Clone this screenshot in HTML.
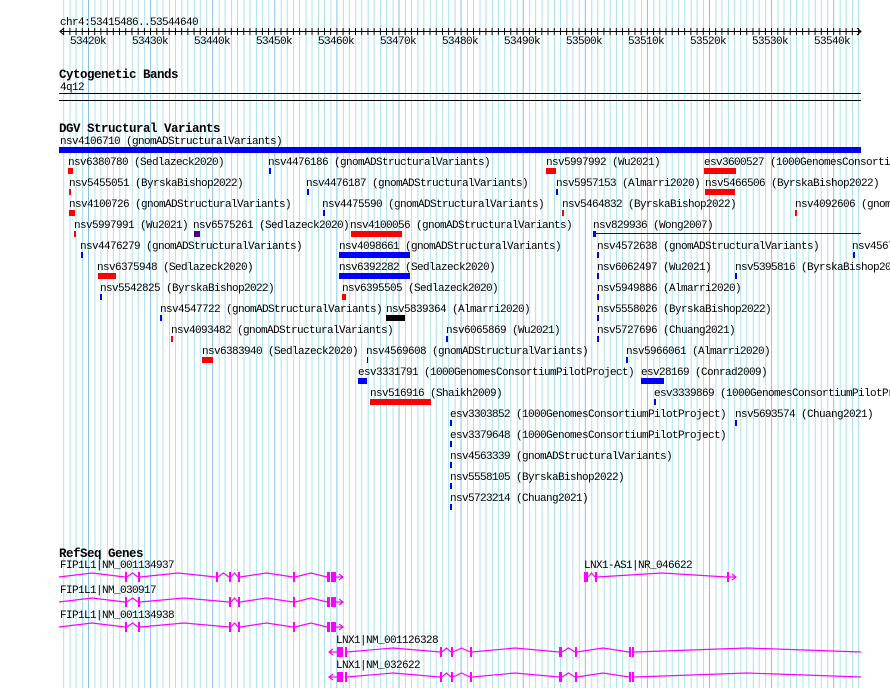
<!DOCTYPE html>
<html><head><meta charset="utf-8"><style>
html,body{margin:0;padding:0;background:#fff;width:890px;height:688px;overflow:hidden}
svg{display:block}
text{font-family:"Liberation Mono",monospace;font-size:11px;letter-spacing:-0.6px;fill:#000}
.h{font-weight:bold;font-size:12.5px;letter-spacing:-0.5px}
</style></head><body>
<svg width="890" height="688" viewBox="0 0 890 688" xmlns="http://www.w3.org/2000/svg" shape-rendering="crispEdges">
<defs>
<pattern id="g" patternUnits="userSpaceOnUse" x="88" y="0" width="62.1" height="688">
<rect x="0" y="0" width="1" height="688" fill="#86c2e6"/>
<rect x="6.21" y="0" width="1" height="688" fill="#a8e4ec"/>
<rect x="12.42" y="0" width="1" height="688" fill="#a8e4ec"/>
<rect x="18.63" y="0" width="1" height="688" fill="#a8e4ec"/>
<rect x="24.84" y="0" width="1" height="688" fill="#a8e4ec"/>
<rect x="31.05" y="0" width="1" height="688" fill="#a8e4ec"/>
<rect x="37.26" y="0" width="1" height="688" fill="#a8e4ec"/>
<rect x="43.47" y="0" width="1" height="688" fill="#a8e4ec"/>
<rect x="49.68" y="0" width="1" height="688" fill="#a8e4ec"/>
<rect x="55.89" y="0" width="1" height="688" fill="#a8e4ec"/>
</pattern>
<pattern id="t" patternUnits="userSpaceOnUse" x="88" y="0" width="6.21" height="688">
<rect x="0" y="28" width="1" height="7" fill="#000"/>
</pattern>
</defs>
<rect x="59" y="0" width="802" height="688" fill="url(#g)"/>

<!-- ruler -->
<text x="60" y="25">chr4:53415486..53544640</text>
<rect x="60" y="31" width="801" height="1" fill="#000"/>
<rect x="62" y="0" width="797" height="688" fill="url(#t)" clip-path="inset(0)"/>
<path d="M64 28 L60 31.5 L64 35 M857 28 L861 31.5 L857 35" stroke="#000" fill="none" shape-rendering="auto"/>
<g text-anchor="middle">
<text x="88" y="44">53420k</text><text x="150" y="44">53430k</text><text x="212" y="44">53440k</text>
<text x="274" y="44">53450k</text><text x="336" y="44">53460k</text><text x="398" y="44">53470k</text>
<text x="460" y="44">53480k</text><text x="522" y="44">53490k</text><text x="584" y="44">53500k</text>
<text x="646" y="44">53510k</text><text x="708" y="44">53520k</text><text x="770" y="44">53530k</text>
<text x="832" y="44">53540k</text>
</g>

<!-- cytobands -->
<text class="h" x="59" y="78">Cytogenetic Bands</text>
<text x="60" y="90">4q12</text>
<rect x="59" y="93" width="802" height="1" fill="#000"/>
<rect x="59" y="100" width="802" height="1" fill="#000"/>

<!-- DGV -->
<text class="h" x="59" y="132">DGV Structural Variants</text>
<text x="60" y="144">nsv4106710 (gnomADStructuralVariants)</text>
<rect x="59" y="147" width="802" height="6" fill="#0000f0"/>

<g>
<!-- row0 -->
<text x="68" y="165">nsv6380780 (Sedlazeck2020)</text><rect x="68" y="168" width="5" height="6" fill="#f00"/>
<text x="268" y="165">nsv4476186 (gnomADStructuralVariants)</text><rect x="269" y="168" width="2" height="6" fill="#00f"/>
<text x="546" y="165">nsv5997992 (Wu2021)</text><rect x="546" y="168" width="10" height="6" fill="#f00"/>
<text x="704" y="165">esv3600527 (1000GenomesConsortiumPilotProject)</text><rect x="704" y="168" width="32" height="6" fill="#f00"/>
<!-- row1 -->
<text x="69" y="186">nsv5455051 (ByrskaBishop2022)</text><rect x="69" y="189" width="2" height="6" fill="#f00"/>
<text x="306" y="186">nsv4476187 (gnomADStructuralVariants)</text><rect x="307" y="189" width="2" height="6" fill="#00f"/>
<text x="556" y="186">nsv5957153 (Almarri2020)</text><rect x="556" y="189" width="2" height="6" fill="#00f"/>
<text x="705" y="186">nsv5466506 (ByrskaBishop2022)</text><rect x="705" y="189" width="30" height="6" fill="#f00"/>
<!-- row2 -->
<text x="69" y="207">nsv4100726 (gnomADStructuralVariants)</text><rect x="69" y="210" width="6" height="6" fill="#f00"/>
<text x="322" y="207">nsv4475590 (gnomADStructuralVariants)</text><rect x="323" y="210" width="2" height="6" fill="#00f"/>
<text x="562" y="207">nsv5464832 (ByrskaBishop2022)</text><rect x="562" y="210" width="2" height="6" fill="#f00"/>
<text x="795" y="207">nsv4092606 (gnomADStructuralVariants)</text><rect x="795" y="210" width="2" height="6" fill="#f00"/>
<!-- row3 -->
<text x="74" y="228">nsv5997991 (Wu2021)</text><rect x="74" y="231" width="2" height="6" fill="#f00"/>
<text x="193" y="228">nsv6575261 (Sedlazeck2020)</text><rect x="194" y="231" width="6" height="6" fill="#4b0082"/>
<text x="350" y="228">nsv4100056 (gnomADStructuralVariants)</text><rect x="351" y="231" width="51" height="6" fill="#f00"/>
<text x="593" y="228">nsv829936 (Wong2007)</text><rect x="593" y="231" width="3" height="6" fill="#00f"/><rect x="595" y="233" width="266" height="1" fill="#00f"/>
<!-- row4 -->
<text x="80" y="249">nsv4476279 (gnomADStructuralVariants)</text><rect x="81" y="252" width="2" height="6" fill="#00f"/>
<text x="339" y="249">nsv4098661 (gnomADStructuralVariants)</text><rect x="339" y="252" width="71" height="6" fill="#00f"/>
<text x="597" y="249">nsv4572638 (gnomADStructuralVariants)</text><rect x="597" y="252" width="2" height="6" fill="#00f"/>
<text x="852" y="249">nsv4567</text><rect x="853" y="252" width="2" height="6" fill="#00f"/>
<!-- row5 -->
<text x="97" y="270">nsv6375948 (Sedlazeck2020)</text><rect x="98" y="273" width="18" height="6" fill="#f00"/>
<text x="339" y="270">nsv6392282 (Sedlazeck2020)</text><rect x="339" y="273" width="71" height="6" fill="#00f"/>
<text x="597" y="270">nsv6062497 (Wu2021)</text><rect x="597" y="273" width="2" height="6" fill="#00f"/>
<text x="735" y="270">nsv5395816 (ByrskaBishop2022)</text><rect x="735" y="273" width="2" height="6" fill="#00f"/>
<!-- row6 -->
<text x="100" y="291">nsv5542825 (ByrskaBishop2022)</text><rect x="100" y="294" width="2" height="6" fill="#00f"/>
<text x="342" y="291">nsv6395505 (Sedlazeck2020)</text><rect x="342" y="294" width="4" height="6" fill="#f00"/>
<text x="597" y="291">nsv5949886 (Almarri2020)</text><rect x="597" y="294" width="2" height="6" fill="#00f"/>
<!-- row7 -->
<text x="160" y="312">nsv4547722 (gnomADStructuralVariants)</text><rect x="160" y="315" width="2" height="6" fill="#00f"/>
<text x="386" y="312">nsv5839364 (Almarri2020)</text><rect x="386" y="315" width="19" height="6" fill="#000"/>
<text x="597" y="312">nsv5558026 (ByrskaBishop2022)</text><rect x="597" y="315" width="2" height="6" fill="#00f"/>
<!-- row8 -->
<text x="171" y="333">nsv4093482 (gnomADStructuralVariants)</text><rect x="171" y="336" width="2" height="6" fill="#f00"/>
<text x="446" y="333">nsv6065869 (Wu2021)</text><rect x="446" y="336" width="2" height="6" fill="#00f"/>
<text x="597" y="333">nsv5727696 (Chuang2021)</text><rect x="597" y="336" width="2" height="6" fill="#00f"/>
<!-- row9 -->
<text x="202" y="354">nsv6383940 (Sedlazeck2020)</text><rect x="202" y="357" width="11" height="6" fill="#f00"/>
<text x="366" y="354">nsv4569608 (gnomADStructuralVariants)</text><rect x="367" y="357" width="1" height="6" fill="#000"/>
<text x="626" y="354">nsv5966061 (Almarri2020)</text><rect x="626" y="357" width="2" height="6" fill="#00f"/>
<!-- row10 -->
<text x="358" y="375">esv3331791 (1000GenomesConsortiumPilotProject)</text><rect x="358" y="378" width="9" height="6" fill="#00f"/>
<text x="641" y="375">esv28169 (Conrad2009)</text><rect x="641" y="378" width="23" height="6" fill="#00f"/>
<!-- row11 -->
<text x="370" y="396">nsv516916 (Shaikh2009)</text><rect x="370" y="399" width="61" height="6" fill="#f00"/>
<text x="654" y="396">esv3339869 (1000GenomesConsortiumPilotProject)</text><rect x="654" y="399" width="2" height="6" fill="#00f"/>
<!-- rows 12-16 -->
<text x="450" y="417">esv3303852 (1000GenomesConsortiumPilotProject)</text><rect x="450" y="420" width="2" height="6" fill="#00f"/>
<text x="735" y="417">nsv5693574 (Chuang2021)</text><rect x="735" y="420" width="2" height="6" fill="#00f"/>
<text x="450" y="438">esv3379648 (1000GenomesConsortiumPilotProject)</text><rect x="450" y="441" width="2" height="6" fill="#00f"/>
<text x="450" y="459">nsv4563339 (gnomADStructuralVariants)</text><rect x="450" y="462" width="2" height="6" fill="#00f"/>
<text x="450" y="480">nsv5558105 (ByrskaBishop2022)</text><rect x="450" y="483" width="2" height="6" fill="#00f"/>
<text x="450" y="501">nsv5723214 (Chuang2021)</text><rect x="450" y="504" width="2" height="6" fill="#00f"/>
</g>

<!-- RefSeq -->
<text class="h" x="59" y="557">RefSeq Genes</text>
<text x="60" y="568">FIP1L1|NM_001134937</text>
<text x="60" y="593">FIP1L1|NM_030917</text>
<text x="60" y="618">FIP1L1|NM_001134938</text>
<text x="336" y="643">LNX1|NM_001126328</text>
<text x="336" y="668">LNX1|NM_032622</text>
<text x="584" y="568">LNX1-AS1|NR_046622</text>

<g stroke="#f0f" fill="none" stroke-width="1.2" shape-rendering="auto">
<path d="M59 577 L92 573 L125 577 M127 577 L132.5 573 L138 577 M140 577 L178 573 L216 577 M218 577 L223.5 573 L229 577 M231 577 L234.5 573 L238 577 M240 577 L266.5 573 L293 577 M295 577 L311 573 L327 577 M336 577 L343 577 M339 574 L343 577 L339 580"/>
<path d="M59 602 L92 598 L125 602 M127 602 L132.5 598 L138 602 M140 602 L184 598 L229 602 M231 602 L234.5 598 L238 602 M240 602 L266.5 598 L293 602 M295 602 L311 598 L327 602 M336 602 L343 602 M339 599 L343 602 L339 605"/>
<path d="M59 627 L92 623 L125 627 M127 627 L132.5 623 L138 627 M140 627 L184 623 L229 627 M231 627 L234.5 623 L238 627 M240 627 L266.5 623 L293 627 M295 627 L311 623 L327 627 M336 627 L343 627 M339 624 L343 627 L339 630"/>
<path d="M333 649 L329 652 L333 655 M329 652 L337 652 M347 652 L393 648 L440 652 M442 652 L446.5 648 L451 652 M453 652 L461.5 648 L470 652 M472 652 L515 648 L559 652 M562 652 L568.5 648 L575 652 M577 652 L603 648 L629 652 M634 652 L747 648 L861 652"/>
<path d="M333 674 L329 677 L333 680 M329 677 L337 677 M347 677 L393 673 L440 677 M442 677 L446.5 673 L451 677 M453 677 L461.5 673 L470 677 M472 677 L515 673 L559 677 M562 677 L568.5 673 L575 677 M577 677 L603 673 L629 677 M634 677 L747 673 L861 677"/>
<path d="M588 577 L591.5 573 L595 577 M597 577 L662 573 L727 577 M729 577 L736 577 M732 574 L736 577 L732 580"/>
</g>
<g fill="#f0f">
<rect x="125" y="572" width="2" height="10"/><rect x="138" y="572" width="2" height="10"/><rect x="216" y="572" width="2" height="10"/><rect x="229" y="572" width="2" height="10"/><rect x="238" y="572" width="2" height="10"/><rect x="293" y="572" width="2" height="10"/><rect x="327" y="572" width="3" height="10"/><rect x="331" y="572" width="5" height="10"/>
<rect x="125" y="597" width="2" height="10"/><rect x="138" y="597" width="2" height="10"/><rect x="229" y="597" width="2" height="10"/><rect x="238" y="597" width="2" height="10"/><rect x="293" y="597" width="2" height="10"/><rect x="327" y="597" width="3" height="10"/><rect x="331" y="597" width="5" height="10"/>
<rect x="125" y="622" width="2" height="10"/><rect x="138" y="622" width="2" height="10"/><rect x="229" y="622" width="2" height="10"/><rect x="238" y="622" width="2" height="10"/><rect x="293" y="622" width="2" height="10"/><rect x="327" y="622" width="3" height="10"/><rect x="331" y="622" width="5" height="10"/>
<rect x="337" y="647" width="6" height="10"/><rect x="345" y="647" width="2" height="10"/><rect x="440" y="647" width="2" height="10"/><rect x="451" y="647" width="2" height="10"/><rect x="470" y="647" width="2" height="10"/><rect x="559" y="647" width="3" height="10"/><rect x="575" y="647" width="2" height="10"/><rect x="629" y="647" width="2" height="10"/><rect x="632" y="647" width="2" height="10"/>
<rect x="337" y="672" width="6" height="10"/><rect x="345" y="672" width="2" height="10"/><rect x="440" y="672" width="2" height="10"/><rect x="451" y="672" width="2" height="10"/><rect x="470" y="672" width="2" height="10"/><rect x="559" y="672" width="3" height="10"/><rect x="575" y="672" width="2" height="10"/><rect x="629" y="672" width="2" height="10"/><rect x="632" y="672" width="2" height="10"/>
<rect x="584" y="572" width="4" height="10"/><rect x="595" y="572" width="2" height="10"/><rect x="727" y="572" width="2" height="10"/>
</g>
</svg>
</body></html>
